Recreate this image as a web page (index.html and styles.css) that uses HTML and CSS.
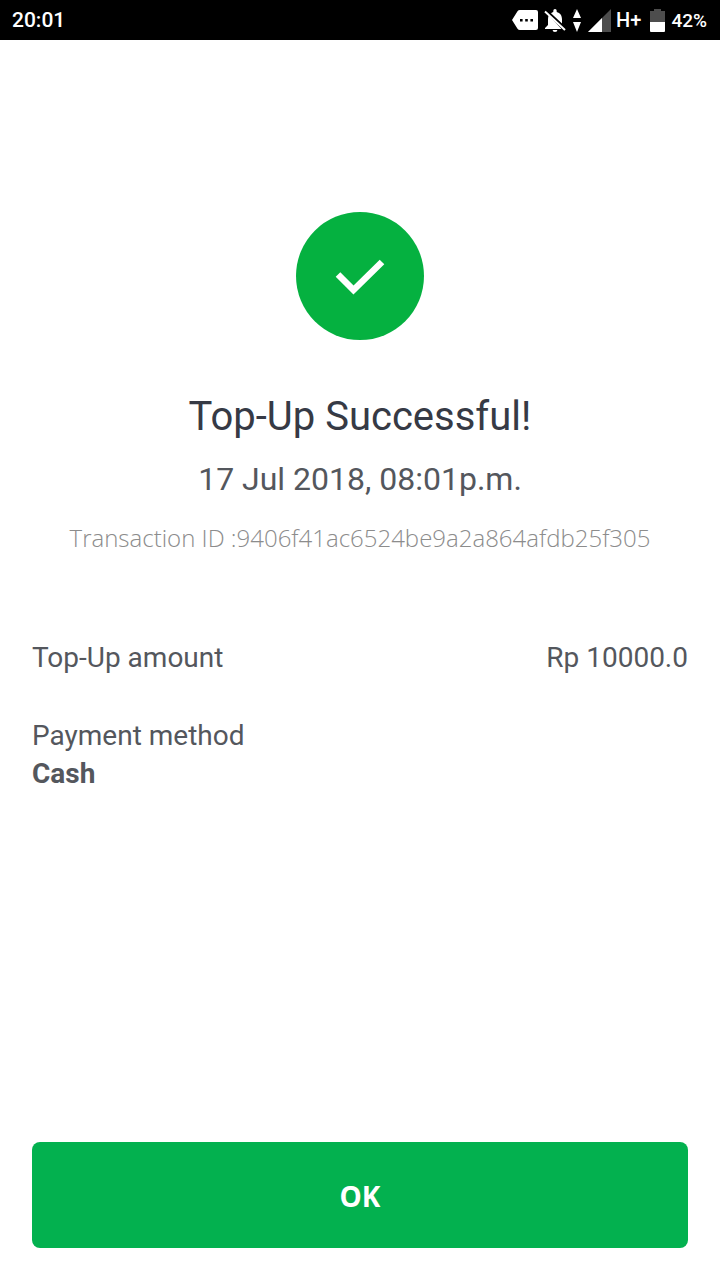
FILE: index.html
```html
<!DOCTYPE html>
<html lang="en">
<head>
    <meta charset="UTF-8">
    <meta name="viewport" content="width=device-width, initial-scale=1.0">
    <title>Top-Up Successful</title>
    <link rel="stylesheet" href="styles.css">
</head>
<body>
    <header class="status-bar">
        <span class="time">20:01</span>
        <div class="status-icons">
            <!-- message -->
            <svg class="icon-message" width="26" height="20" viewBox="0 0 26 20">
                <path fill="#fff" d="M8 0h16a2 2 0 0 1 2 2v16a2 2 0 0 1-2 2H8a3 3 0 0 1-2.500-1.300L0 10l5.500-8.700A3 3 0 0 1 8 0z"/>
                <path d="M8 9h2.600v2.600H8zM13.200 9h2.600v2.600h-2.600zM18.400 9H21v2.600h-2.600z"/>
            </svg>
            <!-- notifications off -->
            <svg class="icon-bell" width="22" height="23" viewBox="0 0 22 23">
                <path fill="#fff" d="M7 4.300C7.600 3.700 8.500 3.300 9.300 3V1.700a1.700 1.700 0 0 1 3.400 0V3c3.500.8 5.300 3.700 5.300 7.200v4.300z"/>
                <path fill="#fff" d="M4.800 6.300C4.200 7.500 4 8.800 4 10.200V16l-3 3v1h16.500zM8.600 21h4.800a2.400 2 0 0 1-4.800 0z"/>
                <path stroke="#fff" stroke-width="2" d="M1 2.500l20 18.500"/>
            </svg>
            <!-- data arrows -->
            <svg class="icon-data" width="8" height="23" viewBox="0 0 8 23">
                <path fill="#fff" d="M4 0l4 9H0zM0 13h8l-4 10z"/>
            </svg>
            <!-- signal -->
            <svg class="icon-signal" width="23" height="23" viewBox="0 0 23 23">
                <path fill="#4d4d4d" d="M23 0v23H0z"/>
                <path fill="#fff" d="M14 9v14H0z"/>
            </svg>
            <span class="network">H+</span>
            <!-- battery -->
            <svg class="icon-battery" width="15" height="23" viewBox="0 0 15 23">
                <path fill="#4d4d4d" d="M4 0h7v2h4v11H0V2h4z"/>
                <path fill="#fff" d="M0 13h15v9a1 1 0 0 1-1 1H1a1 1 0 0 1-1-1z"/>
            </svg>
            <span class="percent">42%</span>
        </div>
    </header>

    <main class="content">
        <div class="success-icon">
            <svg width="128" height="128" viewBox="0 0 128 128">
                <path fill="none" stroke="#fff" stroke-width="6.500" d="M42 62.500L57.500 78 86 50"/>
            </svg>
        </div>
        <h1 class="title">Top-Up Successful!</h1>
        <p class="date">17 Jul 2018, 08:01p.m.</p>
        <p class="transaction">Transaction ID :9406f41ac6524be9a2a864afdb25f305</p>

        <div class="details">
            <div class="row">
                <span>Top-Up amount</span>
                <span>Rp 10000.0</span>
            </div>
            <div class="method">
                <span>Payment method</span>
                <strong>Cash</strong>
            </div>
        </div>
    </main>

    <footer class="footer">
        <button class="ok-button">OK</button>
    </footer>
</body>
</html>
```

FILE: styles.css
```css
* {
    box-sizing: border-box;
}

body {
    display: flex;
    flex-direction: column;
    height: 1280px;
    margin: 0;
    background-color: #fff;
    color: #54575d;
    font-family: Roboto, sans-serif;
}

.status-bar {
    display: flex;
    align-items: center;
    justify-content: space-between;
    height: 40px;
    padding: 0 13px 0 12px;
    background-color: #000;
    color: #fff;
    font-weight: 500;
}

.time {
    font-size: 21px;
}

.status-icons {
    display: flex;
    align-items: center;
}

.icon-message {
    margin-right: 6px;
}

.icon-bell {
    margin-right: 7px;
}

.icon-data {
    margin-right: 7px;
}

.icon-signal {
    margin-right: 5px;
}

.network {
    margin-right: 9px;
    font-size: 20px;
}

.icon-battery {
    margin-right: 6px;
}

.percent {
    font-size: 19px;
}

.content {
    display: flex;
    flex: 1;
    flex-direction: column;
    align-items: center;
    padding-top: 172px;
}

.success-icon {
    width: 128px;
    height: 128px;
    border-radius: 50%;
    background-color: #05b140;
}

.title {
    margin: 53px 0 0;
    color: #363a45;
    font-size: 40px;
    font-weight: 400;
    line-height: 48px;
}

.date {
    margin: 18px 0 0;
    font-size: 32px;
    line-height: 40px;
}

.transaction {
    margin: 23px 0 0;
    color: #8c8c8c;
    font-family: "Open Sans", sans-serif;
    font-size: 24px;
    font-weight: 300;
    line-height: 32px;
    white-space: nowrap;
}

.details {
    width: 100%;
    margin-top: 85px;
    padding: 0 32px;
    font-size: 28px;
    line-height: 38px;
}

.row {
    display: flex;
    justify-content: space-between;
}

.method {
    display: flex;
    flex-direction: column;
    margin-top: 40px;
}

.footer {
    padding: 0 32px 32px;
}

.ok-button {
    display: block;
    width: 100%;
    height: 106px;
    padding: 2px 0 0;
    border: none;
    border-radius: 8px;
    background-color: #03b14f;
    color: #fff;
    font-family: "Open Sans", sans-serif;
    font-size: 28px;
    font-weight: 700;
}
```
